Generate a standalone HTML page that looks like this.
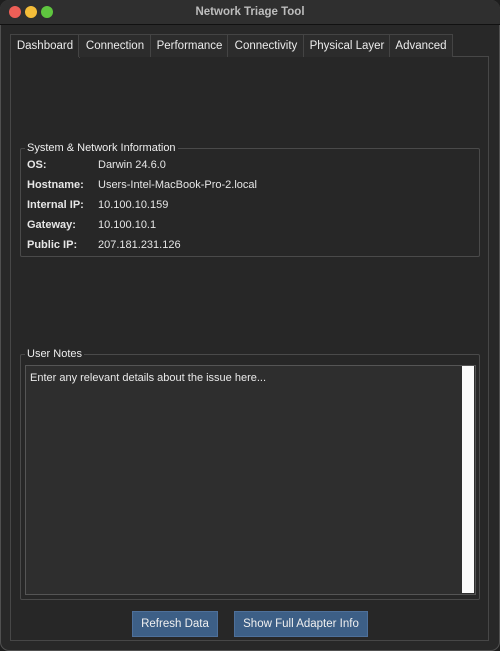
<!DOCTYPE html><html><head><style>
body{margin:0;width:500px;height:651px;background:#1e1e1e;font-family:"Liberation Sans",sans-serif;font-size:11px;color:#e6e6e6;overflow:hidden;position:relative}
.win{position:absolute;left:0;top:0;width:500px;height:651px;box-shadow:inset 0 0 0 1px #505050;border-radius:9px;background:#282828;overflow:hidden}
.title{height:24px;background:#2f2f2f;border-bottom:1px solid #111;text-align:center;line-height:24px;font-weight:bold;color:#bdbdbd;font-size:11.5px}
.dot{position:absolute;top:6px;width:12px;height:12px;border-radius:50%}
.tab{position:absolute;top:34px;height:22px;line-height:22px;background:#2c2c2c;border:1px solid #444;border-bottom:none;text-align:center;font-size:11.5px;color:#ececec}
.pane{position:absolute;left:10px;top:56px;width:477px;height:583px;border:1px solid #474747;background:#272727}
.grp{position:absolute;border:1px solid #4a4a4a;border-radius:2px}
.lbl{position:absolute;background:#272727;padding:0 2px;font-size:11px;color:#eee}
.k{position:absolute;left:27px;font-weight:bold}
.v{position:absolute;left:98px}
.btn{position:absolute;top:611px;height:24px;line-height:24px;background:#3d5f86;border:1px solid #4e709a;text-align:center;color:#f0f0f0;font-size:11.5px}
</style></head><body><div class="win">
<div class="title">Network Triage Tool</div>
<div class="dot" style="left:9px;background:#ed5f57"></div>
<div class="dot" style="left:25px;background:#f4bd39"></div>
<div class="dot" style="left:41px;background:#5fc63f"></div>
<div class="pane"></div>
<div class="tab" style="left:10px;width:68px;background:#272727;height:23px">Dashboard</div>
<div class="tab" style="left:78px;width:72px">Connection</div>
<div class="tab" style="left:150px;width:77px">Performance</div>
<div class="tab" style="left:227px;width:76px">Connectivity</div>
<div class="tab" style="left:303px;width:86px">Physical Layer</div>
<div class="tab" style="left:389px;width:62px">Advanced</div>
<div class="grp" style="left:20px;top:148px;width:458px;height:107px"></div>
<div class="lbl" style="left:25px;top:142px">System &amp; Network Information</div>
<div class="k" style="top:159px">OS:</div><div class="v" style="top:159px">Darwin 24.6.0</div>
<div class="k" style="top:179px">Hostname:</div><div class="v" style="top:179px">Users-Intel-MacBook-Pro-2.local</div>
<div class="k" style="top:199px">Internal IP:</div><div class="v" style="top:199px">10.100.10.159</div>
<div class="k" style="top:219px">Gateway:</div><div class="v" style="top:219px">10.100.10.1</div>
<div class="k" style="top:239px">Public IP:</div><div class="v" style="top:239px">207.181.231.126</div>
<div class="grp" style="left:20px;top:354px;width:458px;height:244px"></div>
<div class="lbl" style="left:25px;top:348px">User Notes</div>
<div style="position:absolute;left:25px;top:365px;width:449px;height:228px;background:#2e2e2e;border:1px solid #555"></div>
<div style="position:absolute;left:462px;top:366px;width:12px;height:227px;background:#fafafa"></div>
<div style="position:absolute;left:30px;top:372px;color:#eaeaea">Enter any relevant details about the issue here...</div>
<div class="btn" style="left:132px;width:84px">Refresh Data</div>
<div class="btn" style="left:234px;width:132px">Show Full Adapter Info</div>
</div></body></html>
